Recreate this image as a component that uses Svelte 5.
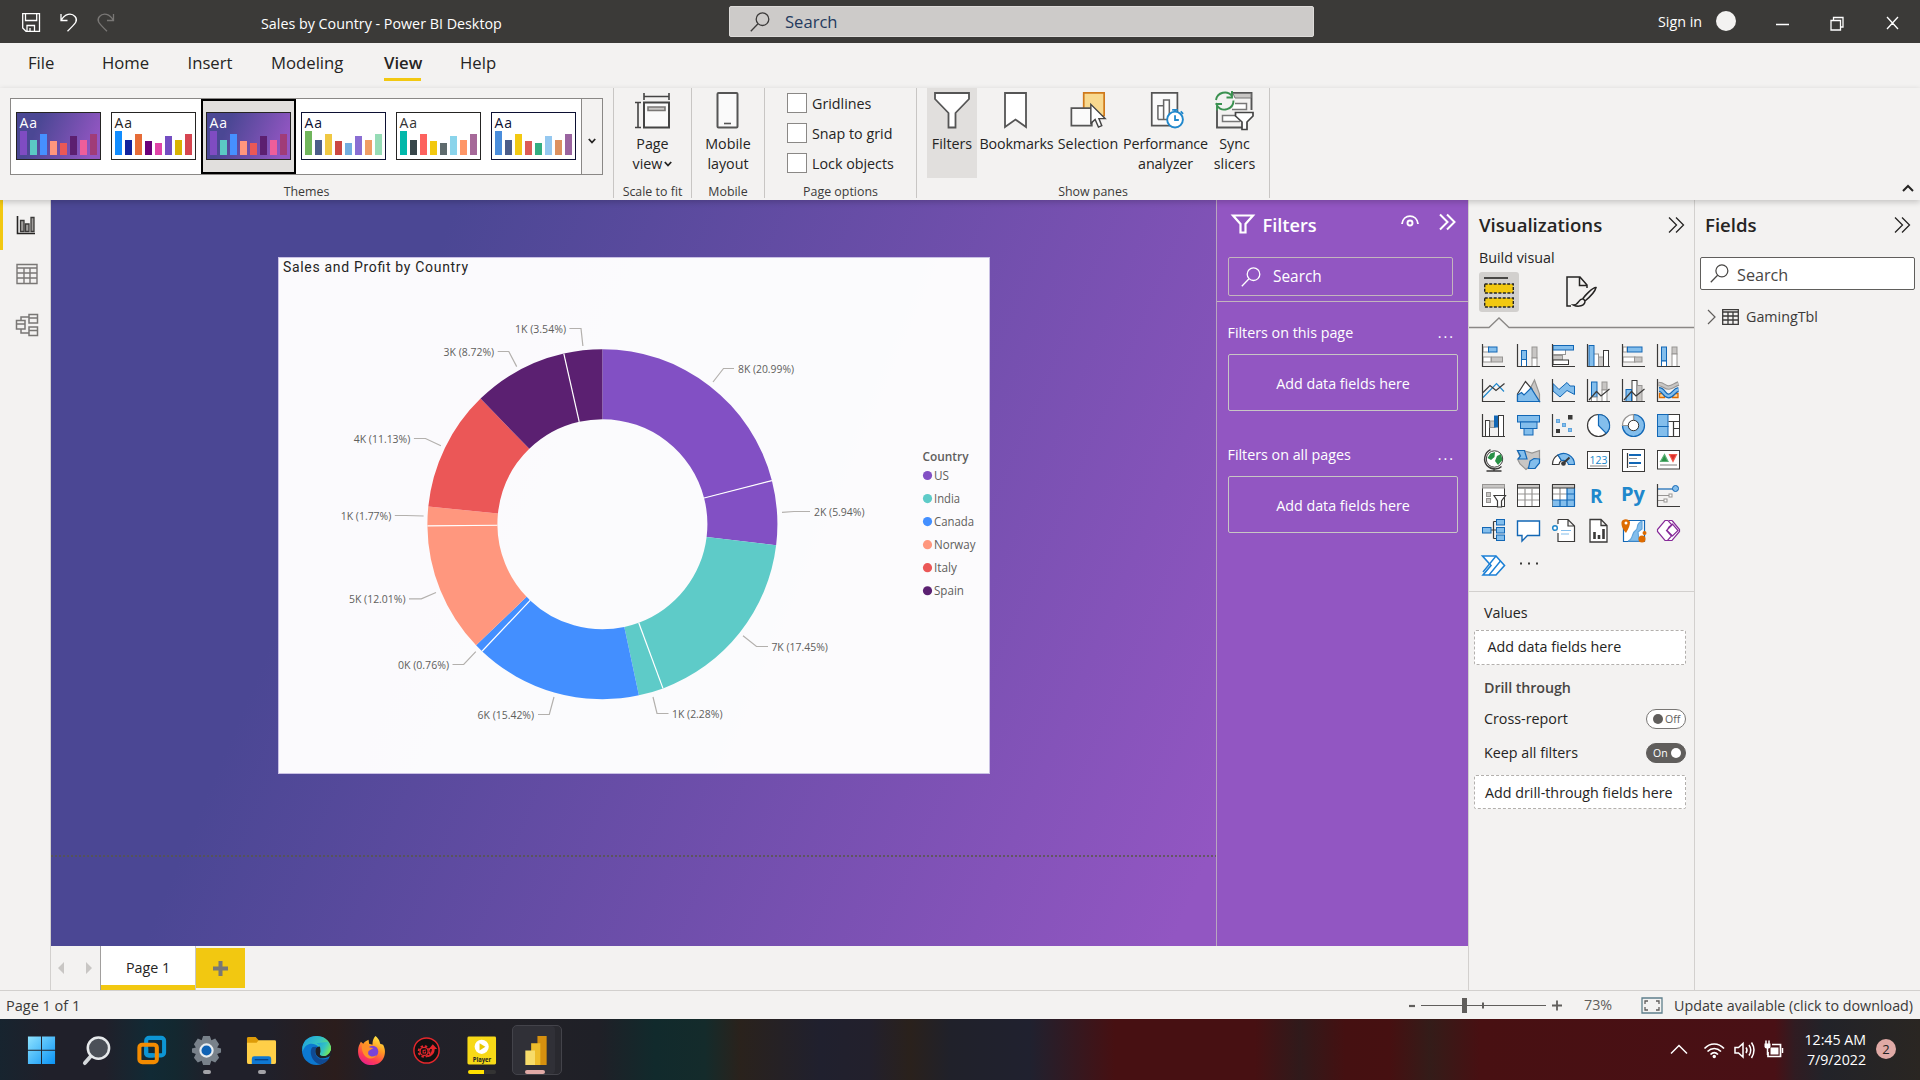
<script>
  const menu = [
    { t: 'File', w: 26, x: 28 }, { t: 'Home', w: 47, x: 48 }, { t: 'Insert', w: 43, x: 38.5 },
    { t: 'Modeling', w: 74, x: 40.5 }, { t: 'View', w: 37, x: 39, on: true }, { t: 'Help', w: 40, x: 39 }
  ];

  const themeHeights = [24, 15, 21, 14, 12, 19, 15, 21];
  const purple = ['#7f4cc2', '#5bc9c4', '#4690ff', '#ff967d', '#ea5856', '#5c1f70', '#ee5e9a', '#a03c78'];
  const themes = [
    { c: purple, dark: true, ink: '#fff', edge: '#252423' },
    { c: ['#118dff', '#12239e', '#e66c37', '#6b007b', '#e044a7', '#744ec2', '#d9b300', '#d64550'], ink: '#252423', edge: '#252423' },
    { c: purple, dark: true, ink: '#fff', edge: '#252423', sel: true },
    { c: ['#70b55c', '#4c5d8a', '#f0c842', '#cc4843', '#72addf', '#8a6ed3', '#f09d64', '#96dcb6'], ink: '#0c1033', edge: '#0c1033' },
    { c: ['#01b8aa', '#374649', '#fd625e', '#f2c80f', '#5f6b6d', '#8ad4eb', '#fe9666', '#a66999'], ink: '#333', edge: '#252423' },
    { c: ['#4a8ddc', '#4c5d8a', '#f3c911', '#dc5b57', '#33ae81', '#95c8f0', '#dd915f', '#9a64a0'], ink: '#0c1033', edge: '#0c1033' }
  ];

  // Donut geometry
  const CX = 324.4, CY = 267.2, RO = 175, RI = 105;
  const slices = [
    [20.99, '#8250c4'], [5.94, '#8250c4'], [17.45, '#5ecbc8'], [2.28, '#5ecbc8'],
    [15.42, '#438fff'], [0.76, '#438fff'], [12.01, '#ff977e'], [1.77, '#ff977e'],
    [11.13, '#eb5757'], [8.72, '#5b2071'], [3.54, '#5b2071']
  ];
  const total = slices.reduce((s, a) => s + a[0], 0);
  let run = 0;
  const at = (f, r) => {
    const a = f * Math.PI * 2;
    return [CX + r * Math.sin(a), CY - r * Math.cos(a)];
  };
  const arcs = slices.map(([v, c], i) => {
    const a = run / total;
    run += v;
    const b = run / total;
    const [p, q, s, u] = [at(a, RO), at(b, RO), at(b, RI), at(a, RI)];
    return { c, split: i > 0 && slices[i - 1][1] === c, p, u,
      d: `M${p}A${RO} ${RO} 0 0 1 ${q}L${s}A${RI} ${RI} 0 0 0 ${u}Z` };
  });
  const labels = [
    ['8K (20.99%)', 738, 369, 56, '713,382 723.5,368.5 734,368.5'],
    ['2K (5.94%)', 814, 512, 50.5, '782,512.3 794,511.5 810,511.5'],
    ['7K (17.45%)', 771.4, 647, 56.5, '743,635.7 756.5,646.5 768,646.5'],
    ['1K (2.28%)', 672, 714, 50.5, '653,697 657,713.5 668.5,713.5'],
    ['6K (15.42%)', 477.6, 715, 56.5, '538,714.5 549.3,714.5 554,697'],
    ['0K (0.76%)', 398, 665, 51, '452.5,664.5 463.7,664.5 475.8,651.6'],
    ['5K (12.01%)', 349, 599, 56.5, '409,598.8 421.3,598.8 436,592.5'],
    ['1K (1.77%)', 340.8, 516, 50.5, '394.8,515.5 406,515.5 423.6,516'],
    ['4K (11.13%)', 353.8, 439, 56.5, '413.9,438.5 425.5,438.5 440.9,445.7'],
    ['3K (8.72%)', 443.6, 352, 50.5, '497.7,351.5 508.8,351.5 516.7,366.6'],
    ['1K (3.54%)', 515, 329, 51, '569.4,328.5 581,328.5 582.9,346']
  ];
  const legend = [
    ['US', '#8250c4', 15], ['India', '#5ecbc8', 26], ['Canada', '#438fff', 40],
    ['Norway', '#ff977e', 41.5], ['Italy', '#eb5757', 23], ['Spain', '#5b2071', 30]
  ];

  // Visual gallery glyphs on a 23px grid
  const K = '#3b3a39', B = '#1267b5', L = '#83beec', G = '#979593', S = '#c8c6c4', W = '#fff';
  const r = (x, y, w, h, f, s) => `<rect x="${x}" y="${y}" width="${w}" height="${h}" fill="${f}" stroke="${s}"/>`;
  const p = (d, s, f = 'none', w = 1.2) => `<path d="${d}" fill="${f}" stroke="${s}" stroke-width="${w}"/>`;
  const ax = p('M.5 0V22.5H23', K);
  const tx = (x, y, size, t, w, c = '#2088cc', len = 0) =>
    `<text x="${x}" y="${y}" font-size="${size}" font-weight="${w}" fill="${c}" ${len ? `textLength="${len}" lengthAdjust="spacingAndGlyphs"` : ''}>${t}</text>`;
  const visuals = [
    r(1, 3, 6, 5, W, G) + r(6.5, 3, 8.5, 5, L, B) + r(1, 13, 8, 5, W, G) + r(9.5, 13, 11, 5, S, G) + ax,
    r(4.5, 6.5, 5, 9, L, B) + r(4.5, 15.5, 5, 7, W, B) + r(15, 3, 5, 11, S, G) + r(15, 14, 5, 8.5, W, G) + ax,
    r(1, 5.5, 12.5, 5, W, G) + r(1, 11.5, 9.5, 4.5, S, G) + r(1, 16, 15.5, 4.5, W, K) + r(1, 1.5, 20.5, 4.5, L, B) + ax,
    r(6.5, 10, 5, 12.5, W, G) + r(11.5, 13, 5, 9.5, S, G) + r(16.5, 6.5, 5, 16, W, K) + r(2, 1.5, 5, 21, L, B) + ax,
    r(1, 3, 4, 5, W, G) + r(5.5, 3, 14.5, 5, L, B) + r(1, 13, 12, 5, W, G) + r(12.5, 13, 7.5, 5, S, G) + ax,
    r(4.5, 3, 5, 14, L, B) + r(4.5, 17, 5, 5.5, W, B) + r(15, 3, 5, 7, S, G) + r(15, 10, 5, 12.5, W, G) + ax,
    p('M1 18.5L14.5 4.5 22 12.5', '#2088cc') + p('M1 13.5L8 6.5 14 11.5 22.5 4.5', K) + ax,
    p('M17.5 1L13 10 22.5 22.5V15z', G, S) + p('M.5 15L8.5 2.5 15 10 9 22H.5z', K, W) + p('M.5 22.5V16L4.5 13.5 7 16 14 9 22.5 22.5z', B, L),
    p('M1 4.5L7 10.5 15 3.5 18 7H22.5V15.5L15 11.5 8 18 1 12z', B, L, 1) + ax,
    r(4.5, 3, 5.5, 15, L, B) + r(4.5, 18, 5.5, 4.5, W, G) + r(15, 3, 5, 8, S, G) + r(15, 11, 5, 11.5, W, G) + p('M2 21L9.5 12.5 14 17 22.5 10', K) + ax,
    r(10, 1.5, 5, 21, W, K) + r(4, 10.5, 5.5, 12, L, B) + r(15, 6.5, 5, 16, S, G) + p('M2 21L9.5 12.5 14 17 22.5 10', K) + ax,
    p('M2.5 14.5H7.500V18.500H2.500zM15.500 14.500H21V18.500H15.500z', '#dd6b00', '#f9d49c', 1.300) + p('M1.5 5C7 5 8 9 12 8.500S17 6 21.500 4.500', G, 'none', 4.500) + p('M1.5 5C7 5 8 9 12 8.500S17 6 21.500 4.500', S, 'none', 2.300) + p('M2 10.500C7 10.500 7 17 11.500 17S17 11 21.500 10.500', B, 'none', 4.8) + p('M2 10.500C7 10.500 7 17 11.500 17S17 11 21.500 10.500', L, 'none', 2.4) + ax,
    r(3.5, 6.500, 4, 16, W, K) + r(8, 7, 5, 6.500, S, G) + r(12.5, 2, 3, 11, '#1267b5', B) + r(16.5, 1.500, 5, 21, W, K) + ax,
    r(.5, 1.5, 22, 6.5, L, B) + r(3.5, 8, 16.5, 6.500, L, B) + r(7, 14.500, 9, 6.5, L, B),
    r(4.5, 5.500, 3, 3, L, '#62a5dc') + r(10.5, 9.5, 3, 3, L, '#62a5dc') + r(16.5, 14.5, 3, 3, L, '#62a5dc') + r(16.500, 1.5, 3.500, 3.5, K, K) + r(4.5, 15.5, 3, 3, K, K) + ax,
    `<circle cx="11.500" cy="11.500" r="11" fill="#fff" stroke="${K}" stroke-width="1.200"/>` + p('M11.500 .5A11 11 0 0 1 19.300 19.300L11.500 11.500z', B, L),
    p('M11.500 .5A11 11 0 1 1 .5 11.500H6.500A5 5 0 1 0 11.500 6.500z', B, L) + p('M.5 11.500A11 11 0 0 1 11.500 .5V6.500A5 5 0 0 0 6.500 11.500z', G, W) + `<circle cx="11.500" cy="11.500" r="5.200" fill="#fff" stroke="${K}"/>`,
    r(.5, .5, 22, 22, W, K) + r(.5, .5, 10.500, 12, L, B) + r(.5, 12.500, 10.500, 10, L, B) + p('M11.500 7.500H22.500M16.500 7.500V22.500M16.500 14.500H22.500', K),
    `<circle cx="12.500" cy="10" r="8.200" fill="#fff" stroke="${K}"/>` + p('M8.500 4.500L13 3 12.500 8 9 11 5.500 9zM15 7L19 5 20.500 11 16 16 13 12z', 'none', '#2a9147') + p('M8.500 .7C2 4 1 12 5 16.500S16 21 19.500 17.500M12 19V22M4.500 22H19.500', K, 'none', 1.400),
    p('M.5 1.500L8 2 15 4 22.500 1.500V11L18 19 12 18 9 20.500 3 15 1 11 3 8z', G, S) + p('M.5 1.500H7.500L10 10H1L3.500 7z', B, L) + p('M22.500 10L17 9.500 13 12 11.500 19.500H18L22.500 14z', B, L),
    p('M.5 15A11 10.500 0 0 1 6 6L9.500 11.500A6 5 0 0 0 7 15.500H.5z', K, W) + p('M6 6A11 11 0 0 1 22.500 15.500H16.500A5.500 5 0 0 0 9.500 11.500z', B, L) + p('M10 15.500L17.500 8.500', K, 'none', 2) + `<circle cx="11.500" cy="14.500" r="2.300" fill="${K}"/>`,
    r(.5, 2.500, 22, 17, W, K) + tx(2.500, 14.500, 10.500, '123', 400, '#2088cc', 18) + p('M3 17H20', G),
    r(.5, .5, 22, 22, W, K) + p('M5.500 4V19', K) + p('M7 6H19M7 14H19', B, 'none', 2) + p('M7 9.500H15M7 17.500H15', G),
    r(.5, 1.500, 22, 18.500, W, K) + p('M3.500 12.500L7.500 5.500 11 12.500z', '#5db075', '#2a9147') + p('M12.500 5.500H19.500L16 12.500z', '#f25a4c', '#d9302c') + p('M3 16H20', G),
    r(.5, .5, 22, 22, W, K) + r(.5, .5, 22, 3.500, S, G) + r(4.500, 8.500, 4, 4, S, G) + r(4.500, 14.500, 4, 4, S, G) + p('M12 11.500H23.500L19.500 17V23H15.500V17z', K, W),
    r(.5, .5, 22, 22, W, K) + r(.5, .5, 22, 3.500, S, K) + p('M8 4V22M15 4V22M1 10H22M1 16H22', G),
    r(.5, .5, 22, 22, W, K) + r(15, 4, 7.500, 18.500, L, 'none') + r(.5, 16, 22, 6.500, L, 'none') + p('M8 4V16M1 10H15', G) + p('M15 4V22.500M22.500 4V22.500M15 10H22.500M.5 16H22.500M8 16V22.500M.5 22.500H22.500', B) + p('M.5 16V.5M22.500 .5V4', K) + r(.5, .5, 22, 3.500, S, K),
    tx(3, 19, 20, 'R', 700, '#2088cc', 12.500),
    tx(-1, 17, 20, 'Py', 700, '#2088cc', 24),
    p('M1 5H16', B) + p('M1 11.500H12M1 16.500H7', G) + `<circle cx="18.500" cy="4.500" r="3" fill="${L}" stroke="${B}"/>` + r(12, 10, 3, 3, W, G) + r(7, 15, 3, 3, W, G) + ax,
    p('M8 11H15M11.500 2.500V19.500M11.500 2.500H15M11.500 19.500H15', K) + r(.5, 8.500, 8.500, 5.500, L, B) + r(14.500, .5, 8, 5.500, L, B) + r(14.500, 8.500, 8, 5.500, L, B) + r(14.500, 16, 8, 5.500, L, B),
    p('M.5 2H22.500V16.500H10.500L5 22V16.500H.5z', B, W, 1.400),
    p('M6 .5H16L22.500 7V22.500H6V14M6 .5V5M16 .5V7H22.500', K, W) + p('M9 11.500H19M9 15H17', L) + `<circle cx="3" cy="9" r="2.300" fill="${W}" stroke="#2088cc" stroke-width="1.500"/>`,
    p('M3 .5H14L20 6.500V23H3zM14 .5V6.500H20', K, W, 1.300) + p('M7.500 20V13M12 20V16M16.500 20V10', K, 'none', 2.600),
    p('M1.500 1.500H22.500V22.500H1.500z', B, W) + p('M6 22C12 20 9 14 14 11C17 9 13 5 20 2V10L16 13L17 22z', '#62a5dc', L) + p('M4 14C-1 8-.500 5-.500 3A4.500 4 0 0 1 8 3C8 6 7 9 4 14z', 'none', '#dd6b00') + `<circle cx="4" cy="4" r="1.500" fill="#fff"/><circle cx="20" cy="20" r="3.500" fill="#dd6b00"/><circle cx="22.500" cy="14" r="2" fill="#dd6b00"/>`,
    p('M8 1.500H15L22.500 10V13L15 21.500H8L.5 13V10z', 'none', W) + p('M8 1.500H11L15 6 9.500 11.500 14.500 17 10.500 21.500H8L.5 12.500V10.500zM15 1.500L22.500 10.500V12.500L15 21.500H11M12 1.500H15M12 8L15.500 5 21 11.500 15.500 17 10 11.500z', '#872b99'),
    p('M.5 2H14L22.500 11.500 14 21H1L9 11.500z', '#1c80d6', W, 1.600) + p('M14 2L1 18M18.500 7L7 21', '#1c80d6', 'none', 1.400),
    `<g fill="${K}"><rect x="3" y="8.500" width="2" height="2"/><rect x="11" y="8.500" width="2" height="2"/><rect x="19" y="8.500" width="2" height="2"/></g>`
  ];
</script>

{#snippet lens(cls)}
  <svg class={cls} viewBox="0 0 20 20" fill="none" stroke="currentColor" stroke-width="1.3"><circle cx="12.500" cy="7.200" r="6.300" /><path d="M8 11.800L.8 19.200" /></svg>
{/snippet}
{#snippet chevrons()}
  <svg class="chev" viewBox="0 0 17 16" fill="none" stroke="currentColor" stroke-width="1.300"><path d="M1 .5L8.500 8 1 15.500M8 .5L15.500 8 8 15.500" /></svg>
{/snippet}

<div class="screen">
  <header class="titlebar">
    <div class="quick">
      <svg width="98" height="24" viewBox="0 0 98 24" fill="none" stroke="#fff" stroke-width="1.300">
        <path d="M.700 2.700H17.500V20.300H4L.7 17zM3.500 2.700V9.500H14.700V2.700M5 20V14.500H12.500V20M8 17V20" />
        <path d="M39 3V9.500H45.500M39.300 9.300C42.500 2.500 49.500 1.500 53 5.500S54 12 45.500 20.300" />
        <path stroke="#797775" d="M91.500 3V9.500H85M91.200 9.300C88 2.500 81 1.500 77.500 5.500S76.500 12 85 20.300" />
      </svg>
    </div>
    <div class="doc">Sales by Country - Power BI Desktop</div>
    <div class="topsearch">{@render lens('l20')}<span>Search</span></div>
    <div class="account"><span>Sign in</span><i></i></div>
    <svg class="winctl" viewBox="0 0 126 16" fill="none" stroke="#fff" stroke-width="1.300">
      <path d="M1 9.500H14M56 5.500H65.500V15H56zM58.500 5V2.500H68V12H66M112 2L123 14M123 2L112 14" />
    </svg>
  </header>

  <nav class="menu">
    {#each menu as m}
      <span class:on={m.on} style="margin-left:{m.x}px;width:{m.w}px">{m.t}</span>
    {/each}
  </nav>

  <section class="ribbon">
    <div class="group g1">
      <div class="gallery">
        {#each themes as t}
          <div class="cell" class:sel={t.sel}>
            <div class="thumb" class:dark={t.dark} style="border-color:{t.edge};color:{t.ink}">
              <b>Aa</b>
              <div class="bars">{#each t.c as c, i}<i style="height:{themeHeights[i]}px;background:{c}"></i>{/each}</div>
            </div>
          </div>
        {/each}
        <div class="more"><svg width="8" height="6" viewBox="0 0 8 6" fill="none" stroke="#252423" stroke-width="1.800"><path d="M.8 1L4 4.500 7.200 1" /></svg></div>
      </div>
      <div class="cap">Themes</div>
    </div>
    <div class="group g2">
      <div class="btn">
        <svg width="36" height="38" viewBox="0 0 36 38" fill="none" stroke="#444" stroke-width="1.600"><path d="M10 1V8M35 1V8M10 4.500H35M1 10.500H7M1 35.500H7M4 10.500V35.500" /><path d="M10 10.500H35V35.500H10z" fill="#fafafa" stroke-width="2" /><path d="M14 15H31V18.500H14z" fill="#c8c6c4" stroke="#797775" /></svg>
        <span>Page<br />view<svg class="dd" viewBox="0 0 8 6" fill="none" stroke="#252423" stroke-width="1.800"><path d="M.8 1L4 4.500 7.200 1" /></svg></span>
      </div>
      <div class="cap">Scale to fit</div>
    </div>
    <div class="group g3">
      <div class="btn">
        <svg width="36" height="38" viewBox="0 0 36 38"><rect x="7.500" y="1" width="20" height="34.500" rx="1" fill="#fafafa" stroke="#555" stroke-width="2" /><path d="M14 31.500H21" stroke="#555" stroke-width="1.600" /></svg>
        <span>Mobile<br />layout</span>
      </div>
      <div class="cap">Mobile</div>
    </div>
    <div class="group g4">
      <div class="checks">
        <label><i></i>Gridlines</label><label><i></i>Snap to grid</label><label><i></i>Lock objects</label>
      </div>
      <div class="cap">Page options</div>
    </div>
    <div class="group g5">
      <div class="row">
        <div class="btn act b1">
          <svg width="36" height="38" viewBox="0 0 36 38"><path d="M1 1H35V7L21.500 21V35.500H14.500V21L1 7z" fill="#fff" stroke="#555" stroke-width="1.800" /></svg>
          <span>Filters</span>
        </div>
        <div class="btn b2">
          <svg width="36" height="38" viewBox="0 0 36 38"><path d="M6 1H27V35L16.500 27.500 6 35z" fill="#fff" stroke="#555" stroke-width="1.800" /></svg>
          <span>Bookmarks</span>
        </div>
        <div class="btn b3">
          <svg width="38" height="40" viewBox="0 0 38 40"><path d="M14.500 1H36V25H14.500z" fill="#f8d98f" stroke="#cf7a1c" stroke-width="1.800" /><path d="M1.500 17H23V35.500H1.500z" fill="#fafafa" stroke="#555" stroke-width="1.800" /><path d="M22 13V33L26.500 29 30 37 33.500 35.500 30.500 28H37z" fill="#fff" stroke="#444" stroke-width="1.500" /></svg>
          <span>Selection</span>
        </div>
        <div class="btn b4">
          <svg width="36" height="40" viewBox="-1.500 0 36 40"><path d="M1.500 1H28.500V35.500H1.500z" fill="#fafafa" stroke="#555" stroke-width="1.800" /><path d="M8 29V14.500H14M14 8.500H20V29H14zM8 29H20" fill="#fff" stroke="#666" stroke-width="1.600" /><circle cx="26" cy="29" r="8.300" fill="#fff" stroke="#2088cc" stroke-width="2" /><path d="M26 24.500V29.500H30M23 18.800H29M26 19V21M32 20.500L34.500 23" fill="none" stroke="#2088cc" stroke-width="1.900" /></svg>
          <span>Performance<br />analyzer</span>
        </div>
        <div class="btn b5">
          <svg class="sync" width="42" height="42" viewBox="0 0 42 42" fill="none"><path d="M18 3H38.500V20M4 20V37.500H29" stroke="#555" stroke-width="1.900" /><path d="M20 3.500H38V8H22z" fill="#c8c6c4" stroke="#777" /><path d="M22 13.500H33.500V19.500H19M29 25.500H9.500V31.500H27" fill="#fff" stroke="#777" stroke-width="1.500" /><path d="M3 10A9 9 0 0 1 19 6V1M19.500 7.500H13.500M20.500 10.500A9 9 0 0 1 4 15.500V20.500M2.500 14H9" stroke="#3a9150" stroke-width="1.900" /><path d="M22.500 22.500H40V26L34 32V39.500H29V32L22.500 26z" fill="#fff" stroke="#444" stroke-width="1.700" /></svg>
          <span>Sync<br />slicers</span>
        </div>
      </div>
      <div class="cap">Show panes</div>
    </div>
    <div class="fold"><svg width="12" height="8" viewBox="0 0 12 8" fill="none" stroke="#252423" stroke-width="2"><path d="M1 7L6 2 11 7" /></svg></div>
  </section>

  <main>
    <aside class="rail">
      <div class="slot on"><svg width="22" height="22" viewBox="0 0 22 22" fill="none"><path d="M1.500 1V18.500H19" stroke="#252423" stroke-width="1.600" /><path d="M4.500 5.500H8V16.500H4.500zM9.500 9H13V16.500H9.500zM15 2.500H18V16.500H15z" fill="#a19f9d" stroke="#3b3a39" stroke-width="1.300" /></svg></div>
      <div class="slot s2"><svg width="22" height="22" viewBox="0 0 22 22" fill="none" stroke="#797775" stroke-width="1.400"><path d="M1 1.500H21V20.500H1zM1 5H21M8 5V20M14 5V20M1 10H21M1 15H21" /></svg></div>
      <div class="slot s3"><svg width="24" height="24" viewBox="0 0 24 24" fill="none" stroke="#797775" stroke-width="1.500"><path d="M1.500 7.500H10V16H1.500zM1.500 11H10M14 1.500H22.500V10H14zM14 5H22.500M14 14H22.500V22.500H14zM14 17.500H22.500M6 7.500V4H14M6 16V20H14" /></svg></div>
    </aside>

    <div class="work">
      <div class="stage">
        <div class="canvas">
          <div class="pageedge"></div>
          <svg class="visual" viewBox="0 0 712 517">
            <text class="vt" x="5" y="14.500" textLength="185" lengthAdjust="spacing">Sales and Profit by Country</text>
            {#each arcs as a}<path d={a.d} fill={a.c} />{/each}
            {#each arcs.filter((a) => a.split) as a}<path d="M{a.p}L{a.u}" stroke="#fff" stroke-width="1.200" />{/each}
            <g transform="translate(-278 -257)">
              {#each labels as [t, x, y, w, pts]}
                <polyline points={pts} fill="none" stroke="#b3b0ad" stroke-width="1.200" />
                <text class="lb" {x} y={y + 4.200} textLength={w} lengthAdjust="spacingAndGlyphs">{t}</text>
              {/each}
              <text class="lg hd" x="922.500" y="461" textLength="46" lengthAdjust="spacingAndGlyphs">Country</text>
              {#each legend as [t, c, w], i}
                <circle cx="927.500" cy={475.500 + i * 23.050} r="4.600" fill={c} />
                <text class="lg" x="934" y={480 + i * 23.050} textLength={w} lengthAdjust="spacingAndGlyphs">{t}</text>
              {/each}
            </g>
          </svg>
        </div>
        <aside class="filters">
          <div class="fhead">
            <svg width="24" height="20" viewBox="0 0 24 20" fill="none" stroke="#fff" stroke-width="2.200"><path d="M2 1.500H22L14.500 10V18.500H9.500V10z" /></svg>
            <h2>Filters</h2>
            <svg class="eye" viewBox="0 0 18 12" fill="none" stroke="#fff" stroke-width="1.900"><path d="M1 9C2 -1.500 16 -1.500 17 9" /><circle cx="9" cy="8" r="2.500" /></svg>
            {@render chevrons()}
          </div>
          <div class="fsearch">{@render lens('l20')}<span>Search</span></div>
          <div class="sep"></div>
          <div class="fl"><span>Filters on this page</span><em>...</em></div>
          <div class="drop">Add data fields here</div>
          <div class="fl two"><span>Filters on all pages</span><em>...</em></div>
          <div class="drop">Add data fields here</div>
        </aside>
      </div>
      <div class="tabs">
        <svg width="34" height="14" viewBox="0 0 34 14" fill="#c8c6c4"><path d="M6 1V13L0 7zM28 1V13L34 7z" /></svg>
        <div class="tab">Page 1</div>
        <div class="add"><svg width="15" height="15" viewBox="0 0 15 15"><path d="M7.500 0V15M0 7.500H15" stroke="#797775" stroke-width="4" /></svg></div>
      </div>
    </div>

    <aside class="viz">
      <div class="phead"><h2>Visualizations</h2>{@render chevrons()}</div>
      <div class="bv">Build visual</div>
      <div class="modes">
        <div class="mode"><svg width="30" height="32" viewBox="0 0 30 32"><path d="M0 2H24" stroke="#252423" stroke-width="1.600" /><path d="M.7 8H29.300V17H.7zM.7 22H29.300V31H.7z" fill="#f2c811" stroke="#252423" stroke-width="1.400" stroke-dasharray="3 1.500" /></svg></div>
        <svg class="brush" viewBox="0 0 32 32" fill="none" stroke="#252423" stroke-width="1.500"><path d="M5 30H1V1H14L21 9V12M13.500 1V9.500H21" /><path d="M30 11.500C27 11 18.500 20 17 22.500L19 25C22 22.500 29 16 30 11.500zM17 23C12.500 22 13 29 7.500 29C12 31.500 19 30 19 25" /></svg>
      </div>
      <svg class="notch" viewBox="0 0 225 12" fill="none" stroke="#8a8886" stroke-width="1.300"><path d="M0 10.500H20L30 1 40 10.500H225" /></svg>
      <div class="grid">
        {#each visuals as v}<svg viewBox="0 0 23 23">{@html v}</svg>{/each}
      </div>
      <div class="wells">
        <div class="line v1">Values</div>
        <div class="well w1">Add data fields here</div>
        <div class="line drill">Drill through</div>
        <div class="line cr"><span>Cross-report</span><span class="tog"><i></i>Off</span></div>
        <div class="line ka"><span>Keep all filters</span><span class="tog ont">On<i></i></span></div>
        <div class="well w2">Add drill-through fields here</div>
      </div>
    </aside>

    <aside class="fields">
      <div class="phead"><h2>Fields</h2>{@render chevrons()}</div>
      <div class="fieldsearch">{@render lens('l19')}<span>Search</span></div>
      <div class="tbl">
        <svg width="9" height="16" viewBox="0 0 9 16" fill="none" stroke="#605e5c" stroke-width="1.200"><path d="M1 1L8 8 1 15" /></svg>
        <svg class="ti" viewBox="0 0 17 16" fill="none" stroke="#3b3a39" stroke-width="1.300"><path d="M.7 .7H16.300V15.300H.7zM.7 3H16M6 3V15M11 3V15M.7 7H16M.7 11H16" /></svg>
        <span>GamingTbl</span>
      </div>
    </aside>
  </main>

  <footer class="status">
    <span class="pg">Page 1 of 1</span>
    <svg class="zoomer" viewBox="0 0 154 18" stroke="#605e5c" fill="none"><path d="M0 10H6" stroke-width="2.200" /><path d="M12 9.500H137" stroke-width="1.200" /><path d="M55.500 2V17" stroke-width="5" /><path d="M74 6.500V12.500" stroke-width="2" /><path d="M143 9.500H153M148 4.500V14.500" stroke-width="1.800" /></svg>
    <span class="pct">73%</span>
    <svg class="fit" viewBox="0 0 22 17" fill="none" stroke="#605e5c" stroke-width="1.300"><path d="M1 1H21V16H1z" stroke="#5f7f8c" /><path d="M4 7V4H7M15 4H18V7M18 10V13H15M7 13H4V10" /></svg>
    <span class="upd">Update available (click to download)</span>
  </footer>

  <div class="taskbar">
    <div class="app"><svg viewBox="0 0 32 32"><defs><linearGradient id="wn" x1="0" y1="0" x2="1" y2="1"><stop offset="0" stop-color="#8fe3ff" /><stop offset="1" stop-color="#0a93f5" /></linearGradient></defs><path fill="url(#wn)" d="M2 1.500H15.500V15.200H2zM16.500 1.500H30V15.200H16.500zM2 16.300H15.500V30H2zM16.500 16.300H30V30H16.500z" /></svg></div>
    <div class="app"><svg viewBox="0 0 32 32"><path d="M11 21L4 29" stroke="#d5d9dc" stroke-width="4" stroke-linecap="round" /><circle cx="18" cy="13.500" r="11" fill="#4b5058" stroke="#e6e9eb" stroke-width="2.600" /></svg></div>
    <div class="app"><svg viewBox="0 0 32 32" fill="none" stroke-width="4.200"><rect x="10.500" y="3" width="18.500" height="18" rx="3" stroke="#0d95d4" /><rect x="3.500" y="10" width="18" height="18" rx="3" stroke="#f38b00" /><path d="M10.500 14V18.500Q10.500 21 13 21H18" stroke="#0d95d4" /></svg></div>
    <div class="app"><svg viewBox="0 0 32 32"><path d="M12.500 1H19.500L21 5.500 25 3.500 29 9.500 27 13 31 14V18L27 19.500 29 23.500 25 28.500 21 26.500 19.500 31H12.500L11 26.500 7 28.500 3 23.500 5 19.500 1 18V14L5 13 3 9.500 7 3.500 11 5.500z" fill="#78818a" /><circle cx="16" cy="16" r="6.300" fill="#0f62b4" stroke="#e8ecef" stroke-width="2.200" /></svg><u></u></div>
    <div class="app"><svg viewBox="0 0 32 32"><path d="M1 3.500Q1 2 2.500 2H10L13 5.500V10H1z" fill="#dd9b08" /><path d="M1 8H11L13 5.500H29.500Q31 5.500 31 7V28Q31 30 29 30H3Q1 30 1 28z" fill="#ffcf48" /><path d="M6 30V24.500Q6 22 8.500 22H23.500Q26 22 26 24.500V30z" fill="#0f78d2" /><path d="M9 25.500H23" stroke="#083f80" stroke-width="1.300" /></svg><u></u></div>
    <div class="app"><svg viewBox="0 0 32 32"><defs><linearGradient id="ed" x1="0" y1="0" x2="1" y2=".5"><stop offset="0" stop-color="#1b9de2" /><stop offset=".6" stop-color="#36c4c0" /><stop offset="1" stop-color="#73e65a" /></linearGradient></defs><circle cx="16" cy="16" r="15" fill="#0c78d0" /><path d="M1.500 12C3 4 10 .5 17 1C26 1.500 31.500 8 31 15C30.500 20 26 22 22 21.500C19 21 18.500 20 20 18C21 12 14 7.500 8 9.500C5 10.500 3 13 1.500 17z" fill="url(#ed)" /><path d="M12 12.500C8 16 10 28 20 30.500C24 29.500 27.500 27 29 24C22 27 14.500 24 14.500 17C14.500 14.500 16 13 16.500 12z" fill="#104a93" /><path d="M20 12C15 11.500 14 16 15.500 20C17 23.500 22 25.500 27.500 23L31.500 21V15L26 21.500Q18 22 20 17.500z" fill="#202027" /><path d="M31 12C31.500 19 26 22.200 21.500 21.500Q18 20.500 20.500 18C21.500 14 19 10 16 8.500L28 7z" fill="url(#ed)" /></svg></div>
    <div class="app"><svg viewBox="0 0 32 32"><defs><linearGradient id="ff" x1=".8" y1="0" x2=".3" y2="1"><stop offset="0" stop-color="#fff04a" /><stop offset=".4" stop-color="#ff9a22" /><stop offset=".75" stop-color="#ff4050" /><stop offset="1" stop-color="#e81f8c" /></linearGradient></defs><path d="M20 1C24 4 24.500 7 25 9L28 10C33 19 28 31 16 31C5 31 0 21 3 11L5 7L7.500 9C9 6.500 11 6 13 5L13.500 9L17 10C17 6 18 3 20 1z" fill="url(#ff)" /><circle cx="17" cy="17" r="6" fill="#7a43d8" /><path d="M6 10C10 9 13 10 14 13L18 13.500L13 16.500C11 21 16 24 21 21C17 28 5 24 6 10z" fill="#ff8f28" /></svg></div>
    <div class="app"><svg viewBox="0 0 32 32"><circle cx="16" cy="16" r="13" fill="#111" stroke="#e5272c" stroke-width="1.500" /><circle cx="13.500" cy="17" r="4.200" fill="none" stroke="#e5272c" stroke-width="1.400" /><circle cx="13.500" cy="17" r="5.700" fill="none" stroke="#e5272c" stroke-width="1.800" stroke-dasharray="2.500 2" /><path d="M17 21.500Q21.500 19 21.500 14.500H18.500L22.500 9.500 27 14.500H24.500Q24.500 21.500 17 23z" fill="#e5272c" /><path d="M15.500 15.500L12.500 16V18.500H15V17" fill="none" stroke="#e5272c" stroke-width="1.100" /></svg></div>
    <div class="app"><svg viewBox="0 0 32 32"><rect x="1.500" y="1.500" width="29.500" height="29" rx="1.500" fill="#f7d917" /><circle cx="16.200" cy="12.200" r="7.300" fill="#fff" /><path d="M14 8.500L20 12.200 14 16z" fill="#e8c800" /><text x="7" y="27.500" font-size="7.500" font-weight="700" fill="#222" textLength="19" lengthAdjust="spacingAndGlyphs">Player</text></svg><u class="yl"></u></div>
    <div class="app live"><svg viewBox="0 0 32 32"><path d="M18 1H27.500V31H18z" fill="#d6900f" /><path d="M11.500 8.500H21V31H11.500z" fill="#eebd2b" /><path d="M5.500 16H15.500V31H5.500z" fill="#f7dc6a" /></svg><u class="pk"></u></div>
    <div class="tray">
      <svg width="114" height="22" viewBox="0 0 114 22" fill="none" stroke="#fff" stroke-width="1.500">
        <path d="M1 14.500L9 6.500 17 14.500" />
        <path d="M34.500 9.500C40 3.500 48.500 3.500 54 9.500M37.500 12.500C41.500 8.500 47 8.500 51 12.500M40.500 15.500C43 13 45.500 13 48 15.500" stroke-width="1.700" /><circle cx="44.300" cy="17.500" r="1.700" fill="#fff" stroke="none" />
        <path d="M65 8.500H68.500L73 4.500V18L68.500 14H65zM76 8.500Q78 11 76 14M79 6Q82.500 11 79 16.500M81.500 3.500Q86.500 11 81.500 19" />
        <path d="M102 5.500H110.500V17.500H98V13" stroke-width="1.700" /><path d="M100.500 8.500H108.500V15.500H100.500z" fill="#fff" stroke="none" /><path d="M112.500 9V14" /><path d="M94.500 4.500H100.500V7.500Q100.500 9.500 98.500 9.500H96.500Q94.500 9.500 94.500 7.500z" fill="#fff" stroke="none" /><path d="M96 1.500V5M99 1.500V5M97.500 9V16" />
      </svg>
      <div class="clock">12:45 AM<br />7/9/2022</div>
      <div class="badge">2</div>
    </div>
  </div>
</div>

<style>
  :global(body) { margin: 0; overflow: hidden; }
  .screen { width: 1920px; height: 1080px; display: flex; flex-direction: column; background: #f3f2f1; color: #252423;
    font: 14.300px/20px 'Open Sans', 'Noto Sans', sans-serif; font-stretch: 92%; white-space: nowrap; overflow: hidden; }
  .screen * { box-sizing: border-box; }
  svg { display: block; flex: none; overflow: visible; }
  h2 { margin: 0; font-size: 18.600px; font-weight: 600; line-height: 24px; }

  .titlebar { height: 43px; flex: none; display: flex; background: #3b3a38; color: #fff; }
  .quick { width: 261px; padding: 11px 0 0 22px; }
  .doc { width: 468px; padding-top: 14px; font-size: 14.300px; }
  .topsearch { width: 585px; height: 31px; margin-top: 6px; padding-left: 20px; display: flex; align-items: center; gap: 15px; border: 1px solid #dcdad8; border-radius: 2px; background: #cdcbc9; color: #243a5e; font-size: 16.600px; }
  .topsearch svg { color: #3b3a39; }
  .l20 { width: 20px; height: 20px; }
  .l19 { width: 19px; height: 19px; }
  .account { margin-left: 344px; display: flex; width: 118px; padding-top: 11px; gap: 12px; }
  .account span { padding-top: 1px; width: 46px; }
  .account i { width: 20px; height: 20px; border-radius: 50%; background: #f3f2f1; }
  .winctl { width: 126px; height: 16px; margin: 15px 0 0 -1px; }

  .menu { height: 45px; flex: none; display: flex; font-size: 16.700px; line-height: 24px; padding-top: 8px; }
  .menu span { height: 30px; }
  .menu .on { font-weight: 600; border-bottom: 3px solid #f2c811; }

  .ribbon { height: 112px; flex: none; display: flex; position: relative; z-index: 2; box-shadow: 0 2px 6px rgba(0, 0, 0, .2); background: #f3f2f1; }
  .group { height: 110px; border-right: 1px solid #c8c6c4; display: flex; flex-direction: column; justify-content: space-between; align-items: center; }
  .g1 { width: 614px; padding-top: 10px; }
  .g2 { width: 78px; }
  .g3 { width: 73px; }
  .g4 { width: 152px; }
  .g5 { width: 353px; }
  .cap { font-size: 12.400px; line-height: 14px; height: 13px; color: #3b3a39; }
  .gallery { width: 593px; height: 77px; margin-right: 1px; display: flex; border: 1px solid #8a8886; background: #fff; }
  .cell { width: 95px; flex: none; display: flex; align-items: center; justify-content: center; padding-bottom: 2px; }
  .sel { background: #e1dfdd; border: 2px solid #000; }
  .thumb { width: 85px; height: 48px; border: 1px solid; background: #fff; padding: 3px 3px 0; }
  .thumb.dark { background: linear-gradient(113deg, #4b4794 25%, #9256c2 90%); }
  .thumb b { display: block; font-weight: 400; font-size: 14px; line-height: 13px; height: 15px; letter-spacing: .8px; }
  .bars { height: 24px; display: flex; align-items: flex-end; gap: 3px; }
  .bars i { width: 7px; }
  .more { flex: 1; border-left: 1px solid #8a8886; background: #f3f2f1; display: flex; align-items: center; justify-content: center; padding: 8px 0 0 0; }
  .btn { display: flex; flex-direction: column; align-items: center; text-align: center; padding-top: 4px; height: 90px; }
  .btn > svg { margin-bottom: 4px; height: 38px; }
  .btn > .sync { height: 42px; margin: -2px 2px 2px 0; }
  .b2 span, .b4 span { letter-spacing: -.15px; }
  .dd { width: 8px; height: 6px; display: inline-block; margin: 0 0 2px 2px; }
  .checks { align-self: flex-start; padding: 5px 0 0 22px; display: flex; flex-direction: column; gap: 10px; }
  .checks label { display: flex; gap: 5px; height: 20px; line-height: 22px; }
  .checks i { width: 20px; height: 20px; border: 1px solid #8a8886; background: #fff; }
  .row { display: flex; align-self: stretch; padding-left: 10px; }
  .act { background: #e1dfdd; }
  .b1 { width: 50px; } .b2 { width: 79px; } .b3 { width: 64px; } .b4 { width: 91px; } .b5 { width: 47px; }
  .fold { flex: 1; display: flex; justify-content: flex-end; align-items: flex-end; padding: 0 6px 8px 0; }

  main { flex: none; height: 790px; display: flex; }
  .rail { width: 51px; border-right: 1px solid #d2d0ce; }
  .slot { height: 50px; display: flex; align-items: center; padding: 0 0 0 16px; }
  .slot.on { border-left: 3px solid #f2c811; padding: 2px 0 0 13px; }
  .s2 { padding-bottom: 2px; }
  .slot.s3 { padding-left: 15px; }
  .work { width: 1417px; display: flex; flex-direction: column; }
  .stage { height: 746px; display: flex; }
  .canvas { width: 1165px; display: flex; position: relative; padding: 57px 0 0 227px; background: linear-gradient(113deg, #4b4794 27.500%, #9256c2 97%); }
  .pageedge { position: absolute; left: 0; right: 0; top: 655px; height: 2px; background: repeating-linear-gradient(90deg, rgba(88, 88, 70, .75) 0 2px, transparent 2px 4px); }
  .visual { width: 712px; height: 517px; background: rgba(255, 255, 255, .975); outline: 1px solid #c9c0e4; outline-offset: -1px; }
  .vt { font: 14px Roboto, sans-serif; fill: #252423; }
  .lb { font-size: 10.800px; fill: #605e5c; }
  .lg { font-size: 11.800px; fill: #605e5c; }
  .hd { font-weight: 600; }

  .filters { width: 252px; background: #9256c2; border-left: 1px solid #b9a6bf; color: #fff; }
  .fhead { display: flex; align-items: flex-start; padding: 14px 0 0 14px; height: 57px; color: #fff; }
  .fhead h2 { width: 146px; padding-left: 7.500px; font-size: 18.200px; line-height: 23px; }
  .eye { width: 18px; height: 12px; margin-top: 1px; }
  .fhead .chev { margin-left: 20px; stroke-width: 2; }
  .fsearch { margin-left: 11px; width: 225px; height: 39px; border: 1px solid #c4b5bd; border-radius: 2px; display: flex; align-items: center; padding: 0 0 0 12px; gap: 12px; font-size: 15.400px; }
  .sep { margin-top: 5px; border-top: 1px solid #c4b5bd; height: 23px; }
  .fl { display: flex; justify-content: space-between; padding: 0 15px 0 10.500px; height: 30px; line-height: 18px; }
  .fl em { font-style: normal; letter-spacing: 2px; margin-right: -2px; }
  .fl.two { margin-top: 35px; }
  .drop { margin-left: 11px; width: 230px; height: 57px; border: 1px solid #c8c6c4; border-radius: 2px; display: flex; align-items: center; justify-content: center; padding-top: 3px; }
  .tabs { height: 44px; display: flex; align-items: flex-start; }
  .tabs > svg { margin: 15px 8px 0 7px; }
  .tab { width: 96px; height: 44px; background: #fff; border: solid #a19f9d; border-width: 0 1px 0; border-right-color: #c8c6c4; box-shadow: inset 0 -5px #f2c811; text-align: center; padding-top: 12px; }
  .add { width: 49px; height: 40px; margin-top: 2px; background: #f2c811; display: flex; align-items: center; justify-content: center; }

  .viz { width: 227px; border-left: 1px solid #d2d0ce; border-right: 1px solid #d2d0ce; }
  .fields { width: 225px; }
  .phead { display: flex; justify-content: space-between; padding: 13px 9px 0 10px; height: 48px; }
  .chev { width: 17px; height: 16px; margin-top: 4px; }
  .fhead .chev { margin-top: 0; }
  .bv { padding-left: 10px; height: 24px; }
  .modes { display: flex; padding-left: 10px; height: 45px; }
  .mode { width: 40px; height: 40px; border-radius: 3px; background: #d2d0ce; display: flex; align-items: center; justify-content: center; }
  .brush { width: 32px; height: 32px; margin: 4px 0 0 47px; }
  .notch { width: 225px; height: 12px; margin-bottom: 15px; }
  .grid { display: grid; grid-template-columns: repeat(6, 23px); grid-auto-rows: 23px; gap: 12px; padding-left: 13px; height: 247px; }
  .wells { border-top: 1px solid #d2d0ce; padding: 11px 0 0 5px; }
  .line { display: flex; justify-content: space-between; padding: 0 8px 0 10px; height: 20px; align-items: center; }
  .v1 { margin-bottom: 7px; }
  .well { width: 212px; border: 1px dashed #b3b0ad; border-radius: 2px; background: #fff; display: flex; align-items: center; }
  .w1 { height: 35px; padding: 0 0 2px 12.500px; }
  .drill { margin-top: 13px; font-weight: 600; color: #484644; letter-spacing: -.1px; }
  .cr { margin-top: 11px; }
  .ka { margin-top: 14px; margin-bottom: 12px; }
  .w2 { height: 34px; padding: 2px 0 0 10px; }
  .tog { width: 40px; height: 20px; border-radius: 10px; border: 1px solid #797775; background: #fff; font-size: 10.500px; line-height: 18px; color: #605e5c; display: flex; align-items: center; padding-left: 6px; gap: 2px; }
  .tog i { width: 10px; height: 10px; border-radius: 5px; background: #605e5c; }
  .ont { background: #605e5c; color: #fff; border-color: #605e5c; gap: 3px; }
  .ont i { background: #fff; }
  .fieldsearch { margin: 9px 0 0 5px; width: 215px; height: 33px; border: 1px solid #605e5c; border-radius: 2px; background: #fff; display: flex; align-items: center; padding-left: 9px; gap: 8px; font-size: 16.200px; color: #484644; }
  .fieldsearch span { padding-top: 2px; }
  .tbl { display: flex; align-items: center; padding: 17px 0 0 12px; color: #3b3a39; }
  .ti { width: 17px; height: 16px; margin: 0 7px 0 6px; }

  .status { height: 29px; flex: none; display: flex; align-items: center; border-top: 1px solid #d2d0ce; padding-left: 6px; color: #3b3a39; padding-top: 2px; }
  .pg { width: 1403px; font-size: 14.500px; }
  .zoomer { width: 154px; height: 18px; margin-top: -2px; }
  .pct { margin: -3px 0 0 21px; width: 57px; color: #605e5c; }
  .fit { width: 22px; height: 17px; margin-top: -1px; }
  .upd { margin-left: 11px; }

  .taskbar { height: 61px; flex: none; display: flex; padding-left: 14px; color: #fff; background: linear-gradient(90deg, #17242f 0, #20202a 45px, #20202a 105px, #112a35 150px, #132830 175px, #20202a 210px, #20202a 270px, #2b1d1c 335px, #20202a 375px, #222127 500px, #1f2027 600px, #112a2c 655px, #142b2b 705px, #2a221c 740px, #20202e 820px, #22202c 870px, #2a211c 910px, #20212a 950px, #20212f 1030px, #471012 1115px, #471012 1255px, #301a1b 1300px, #451011 1345px, #461011 1390px, #341c19 1430px, #481012 1480px, #491015 1775px, #301c22 1795px, #222329 1825px, #2a2622 1920px); }
  .app { width: 55.020px; height: 61px; flex: none; display: flex; flex-direction: column; align-items: center; padding-top: 15.500px; }
  .app svg { width: 31px; height: 31px; }
  u { width: 8px; height: 4px; border-radius: 2px; background: #a3a3a8; margin-top: 4px; flex: none; }
  .yl { width: 28px; background: linear-gradient(90deg, #ffe000 58%, #333 58%); }
  .pk { width: 20px; background: #e0aaa6; }
  .live { width: 50px; height: 50px; margin: 6px 0 0 3px; padding: 8.500px 4px 0 0; border-radius: 5px; background: #303037; border: 1px solid #43434a; box-shadow: inset -6px 0 #29292f; }
  .tray { margin-left: auto; display: flex; width: 250px; padding-top: 11px; }
  .tray > svg { margin-top: 9px; }
  .clock { width: 82px; text-align: right; font-size: 14.200px; }
  .badge { width: 20px; height: 20px; border-radius: 50%; background: #e0aaa6; color: #222; margin: 9px 0 0 10px; text-align: center; font-size: 13px; line-height: 20px; }
</style>
